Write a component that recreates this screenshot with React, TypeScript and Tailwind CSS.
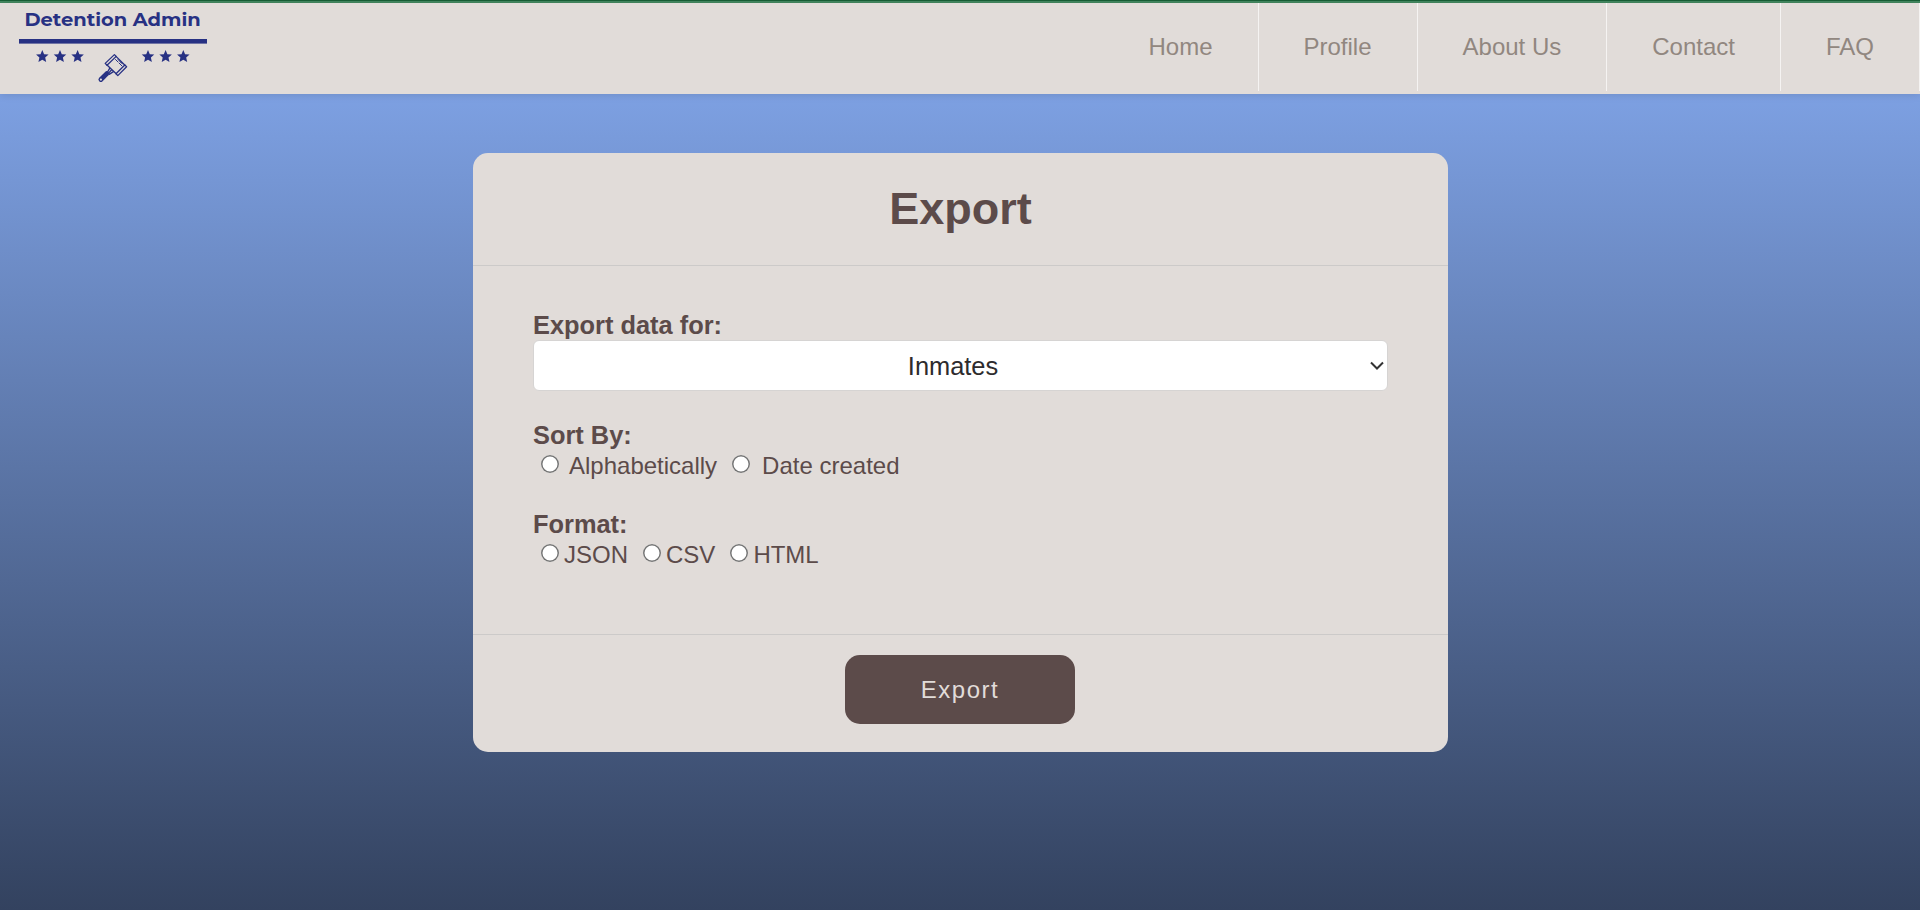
import React from "react";

const navItems = ["Home", "Profile", "About Us", "Contact", "FAQ"];
const starCentres = [42.3, 60, 77.6, 148, 165.6, 183.3];

function starPoints(cx: number, cy: number, r: number) {
  return Array.from({ length: 10 }, (_, i) => {
    const a = -Math.PI / 2 + (i * Math.PI) / 5;
    const d = i % 2 ? r * 0.46 : r;
    return `${cx + d * Math.cos(a)},${cy + d * Math.sin(a)}`;
  }).join(" ");
}

function Logo() {
  return (
    <svg width="240" height="91" viewBox="0 3 240 91" className="block shrink-0 text-[#273183]" fill="currentColor">
      <text x="24.5" y="26" fontSize="18.6" fontWeight="700" fontFamily="Montserrat, Inter, sans-serif" textLength="176.2" lengthAdjust="spacingAndGlyphs">
        Detention Admin
      </text>
      <rect x="19" y="39" width="188" height="4.6" />
      {starCentres.map((cx) => (
        <polygon key={cx} points={starPoints(cx, 56.6, 6.6)} />
      ))}
      <g fill="none" stroke="currentColor" strokeWidth="1.3" strokeLinejoin="round" strokeLinecap="round">
        <path d="M105.2 63.4L114.4 54.6L116.2 56.4L107 65.2Z" />
        <path d="M116 73.8L124.8 65L126.6 66.8L117.8 75.6Z" />
        <path d="M107 65L116.2 73.8M116 56.4L125 65.2" />
        <path d="M115.5 59.5l2.4 2.4M118 59.5l3.4 3.4M119 63l3 3M120.5 62l2 2" strokeWidth="1" />
        <path d="M109.8 68.2L107.2 72.6M113.4 71.6L109.2 74.4M111.4 70L108.4 73.4" />
      </g>
      <path d="M100.9 79.5L106.8 73.6" fill="none" stroke="currentColor" strokeWidth="4.8" strokeLinecap="round" />
      <circle cx="100.9" cy="79.6" r="1.1" className="fill-[#e1dcd9]" />
    </svg>
  );
}

function Radio({ name, label, className }: { name: string; label: string; className: string }) {
  return (
    <label className="flex items-start">
      <input
        type="radio"
        name={name}
        className="m-0 mt-1 block size-[18px] shrink-0 appearance-none rounded-full bg-white shadow-[inset_0_0_0_1.5px_#767676] checked:shadow-[inset_0_0_0_1.5px_#0075ff,inset_0_0_0_4px_#fff,inset_0_0_0_9px_#0075ff]"
      />
      <span className={`pt-px whitespace-nowrap ${className}`}>{label}</span>
    </label>
  );
}

export default function App() {
  return (
    <div className="flex h-[910px] w-full flex-col overflow-hidden bg-[linear-gradient(to_bottom,#7da0e2_94px,#33425f)] font-['Liberation_Sans',Arial,sans-serif] text-[#5c4b4a]">
      <div className="h-px shrink-0 bg-[#176036]" />
      <div className="h-0.5 shrink-0 bg-[#438860]" />
      <header className="flex h-[91px] shrink-0 justify-between bg-[#e1dcd9] shadow-[0_1px_8px_rgba(0,0,0,0.12)]">
        <Logo />
        <nav className="flex h-[88px] text-2xl text-[#918780]">
          {navItems.map((item) => (
            <a key={item} href="#" className="flex items-center border-r border-[#f5f3f2] px-[45px]">
              {item}
            </a>
          ))}
        </nav>
      </header>

      <main className="mt-[59px] ml-[473px] flex h-[599px] w-[975px] shrink-0 flex-col rounded-[15px] bg-[#e1dcd9]">
        <h1 className="flex h-[113px] items-center justify-center border-b border-[#cccac9] text-[45px] font-bold">
          Export
        </h1>
        <form className="flex h-[368px] flex-col px-[60px] pt-[44px]">
          <label className="h-[30px] text-[25.4px] leading-[30px] font-bold">Export data for:</label>
          <div className="relative flex h-[51px] w-[855px] items-center justify-center rounded-[6px] border border-[#d6d4d3] bg-white text-[25.4px] text-[#2d2b2d]">
            <span className="pt-0.5 pr-[15px]">Inmates</span>
            <svg className="absolute top-[19.5px] right-[3px]" width="14" height="10" viewBox="0 0 14 10" fill="none" stroke="#333" strokeWidth="2">
              <path d="M1 1.5L7 7.5L13 1.5" />
            </svg>
          </div>
          <div className="mt-[29px] h-[31px] text-[25.4px] leading-[30px] font-bold">Sort By:</div>
          <div className="flex h-[29px] gap-[15px] pl-2 text-2xl leading-[28px]">
            <Radio name="sort" label="Alphabetically" className="pl-[10px]" />
            <Radio name="sort" label="Date created" className="pl-[12px]" />
          </div>
          <div className="mt-[29px] h-[31px] text-[25.4px] leading-[30px] font-bold">Format:</div>
          <div className="flex h-[29px] gap-[15px] pl-2 text-2xl leading-[28px]">
            <Radio name="format" label="JSON" className="pl-[5px]" />
            <Radio name="format" label="CSV" className="pl-[5px]" />
            <Radio name="format" label="HTML" className="pl-[5px]" />
          </div>
        </form>
        <footer className="flex flex-1 justify-center border-t border-[#cccac9] pt-5 pr-px">
          <button className="h-[69px] w-[230px] rounded-[15px] bg-[#5c4b4a] text-2xl tracking-[1.5px] text-[#e1dcd9]">
            Export
          </button>
        </footer>
      </main>
    </div>
  );
}
